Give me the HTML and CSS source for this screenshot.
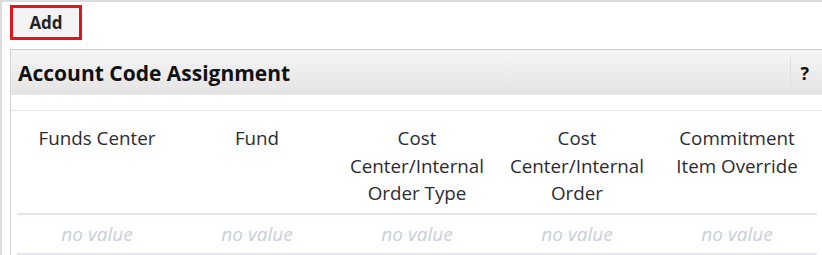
FILE: index.html
```html
<!DOCTYPE html>
<html lang="en">
<head>
  <meta charset="UTF-8">
  <title>Account Code Assignment</title>
  <link rel="stylesheet" href="styles.css">
</head>
<body>
  <div class="page">
    <div class="toolbar">
      <button class="btn-add">Add</button>
    </div>

    <div class="panel">
      <div class="panel-head">
        <h2>Account Code Assignment</h2>
        <span class="help">?</span>
      </div>
      <div class="panel-body">
        <table class="grid">
          <thead>
            <tr>
              <th>Funds Center</th>
              <th>Fund</th>
              <th>Cost<br>Center/Internal<br>Order Type</th>
              <th>Cost<br>Center/Internal<br>Order</th>
              <th>Commitment<br>Item Override</th>
            </tr>
          </thead>
          <tbody>
            <tr>
              <td>no value</td>
              <td>no value</td>
              <td>no value</td>
              <td>no value</td>
              <td>no value</td>
            </tr>
          </tbody>
        </table>
      </div>
    </div>
  </div>
</body>
</html>
```

FILE: styles.css
```css
body { margin: 0; font-family: "Open Sans", sans-serif; color: #2b2b33; background: #fff; }
.page { border-top: 2px solid #dcdcdc; border-left: 2px solid #dcdcdc; padding: 3px 0 0 8px; height: 255px; box-sizing: border-box; overflow: hidden; }
.toolbar { display: flex; }
.btn-add { width: 72px; height: 35px; box-sizing: border-box; border: 3px solid #e3141f; background: #f3f3f3; font-family: "Open Sans", sans-serif; font-weight: bold; font-size: 17px; color: #222; padding: 0 0 1px; }
.panel { margin-top: 9px; border-top: 1px solid #cfcfcf; border-left: 1px solid #d4d4d4; }
.panel-head { display: flex; align-items: center; justify-content: space-between; height: 45px; background: linear-gradient(#f5f5f5, #e4e4e4); }
.panel-head h2 { margin: 0 0 0 7px; font-size: 21px; font-weight: bold; color: #111; }
.help { font-weight: bold; font-size: 18px; color: #111; padding: 4px 13px 4px 9px; border-left: 1px solid #dedede; }
.panel-body { margin-top: 15px; border-top: 1px solid #e4e6ea; padding: 0 6px; }
.grid { width: 800px; border-collapse: collapse; table-layout: fixed; }
.grid th { font-weight: normal; font-size: 18.8px; line-height: 27.5px; padding: 14px 0 5px; vertical-align: top; text-align: center; border-bottom: 2px solid #e2e5ec; }
.grid td { font-style: italic; font-size: 19px; color: #c9cedb; text-align: center; padding: 6px 0 6px; border-bottom: 2px solid #e2e5ec; }
```
